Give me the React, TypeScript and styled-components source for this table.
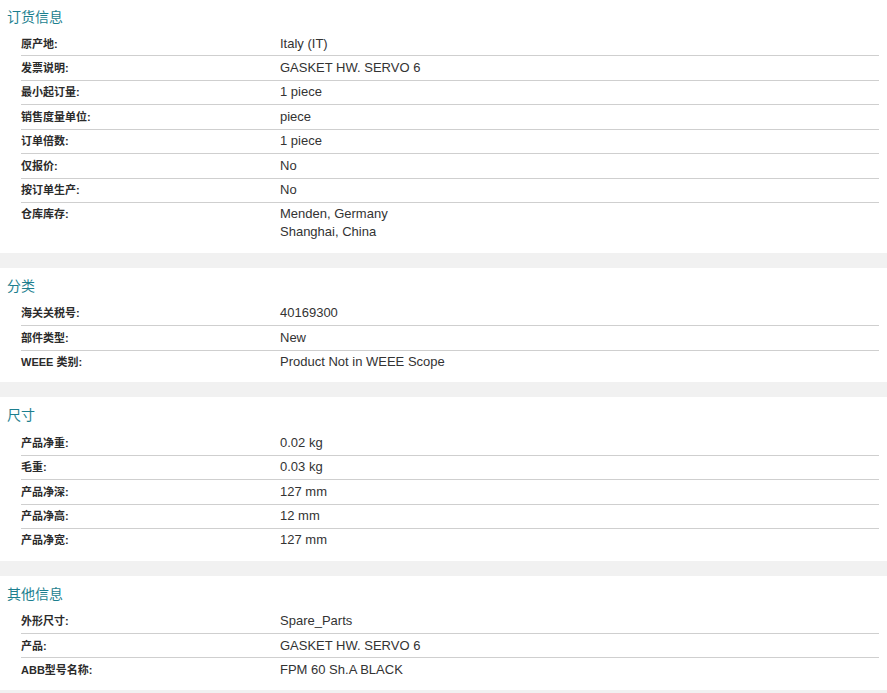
import styled, { createGlobalStyle } from 'styled-components'

type Row = { label: string; value: string[] }
type Group = { title: string; rows: Row[] }

const groups: Group[] = [
  {
    title: '订货信息',
    rows: [
      { label: '原产地:', value: ['Italy (IT)'] },
      { label: '发票说明:', value: ['GASKET HW. SERVO 6'] },
      { label: '最小起订量:', value: ['1 piece'] },
      { label: '销售度量单位:', value: ['piece'] },
      { label: '订单倍数:', value: ['1 piece'] },
      { label: '仅报价:', value: ['No'] },
      { label: '按订单生产:', value: ['No'] },
      { label: '仓库库存:', value: ['Menden, Germany', 'Shanghai, China'] },
    ],
  },
  {
    title: '分类',
    rows: [
      { label: '海关关税号:', value: ['40169300'] },
      { label: '部件类型:', value: ['New'] },
      { label: 'WEEE 类别:', value: ['Product Not in WEEE Scope'] },
    ],
  },
  {
    title: '尺寸',
    rows: [
      { label: '产品净重:', value: ['0.02 kg'] },
      { label: '毛重:', value: ['0.03 kg'] },
      { label: '产品净深:', value: ['127 mm'] },
      { label: '产品净高:', value: ['12 mm'] },
      { label: '产品净宽:', value: ['127 mm'] },
    ],
  },
  {
    title: '其他信息',
    rows: [
      { label: '外形尺寸:', value: ['Spare_Parts'] },
      { label: '产品:', value: ['GASKET HW. SERVO 6'] },
      { label: 'ABB型号名称:', value: ['FPM 60 Sh.A BLACK'] },
    ],
  },
]

export default function App() {
  return (
    <>
      <GlobalStyle />
      <Page>
        {groups.map((g) => (
          <Section key={g.title}>
            <SectionTitle>{g.title}</SectionTitle>
            {g.rows.map((r) => (
              <AttrRow key={r.label}>
                <Label>{r.label}</Label>
                <Value>
                  {r.value.map((v) => (
                    <div key={v}>{v}</div>
                  ))}
                </Value>
              </AttrRow>
            ))}
          </Section>
        ))}
      </Page>
    </>
  )
}

const GlobalStyle = createGlobalStyle`
  html, body {
    margin: 0;
    padding: 0;
    overflow: hidden;
    background: #fff;
  }
  body {
    font-family: "Liberation Sans", Arial, "Noto Sans CJK SC", sans-serif;
  }
`

const Page = styled.div`
  width: 887px;
`

const Section = styled.section`
  padding: 8px 0 8.3px;
  border-bottom: 15px solid #f1f1f1;

  &:first-child {
    padding-top: 7px;
  }
`

const SectionTitle = styled.h3`
  margin: 0 0 8px 7px;
  font-family: "Noto Sans CJK SC", sans-serif;
  font-size: 14px;
  font-weight: 400;
  line-height: 18px;
  color: #1d7f8f;

  section:first-child > & {
    margin-bottom: 7px;
  }
`

const AttrRow = styled.div`
  display: grid;
  grid-template-columns: 259px 1fr;
  margin: 0 8px 0 21px;
  padding: 2.5px 0 2.93px;
  border-bottom: 1px solid #cfcfcf;
  line-height: 18px;

  &:last-child {
    border-bottom: none;
  }
`

const Label = styled.div`
  font-family: "Liberation Sans", Arial, "Noto Sans CJK SC", sans-serif;
  font-size: 11px;
  font-weight: 700;
  color: #2b2b2b;
`

const Value = styled.div`
  font-family: "Liberation Sans", Arial, sans-serif;
  font-size: 13px;
  color: #333;
`
